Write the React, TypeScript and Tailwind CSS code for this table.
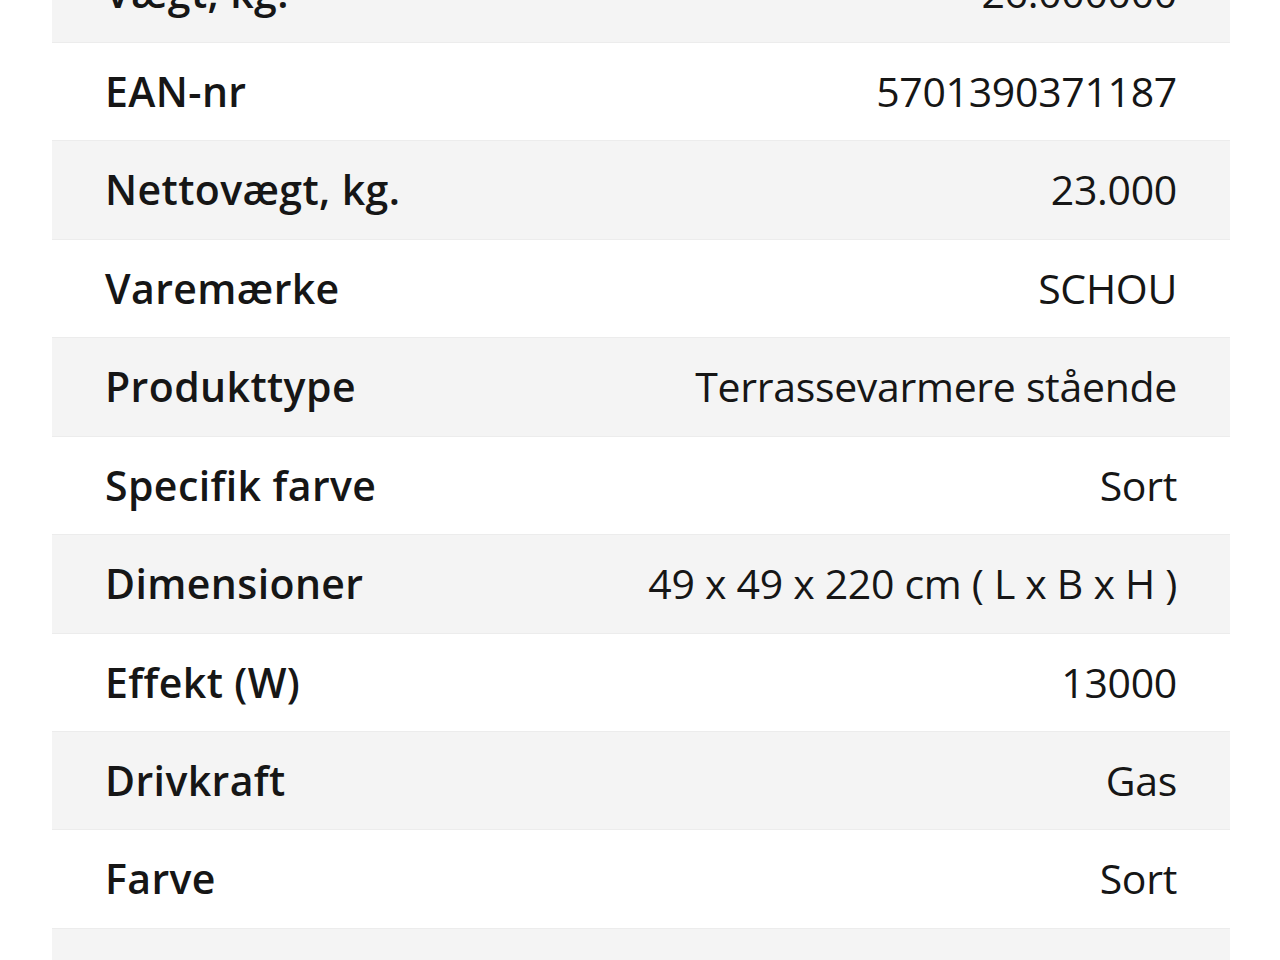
const rows: [string, string][] = [
  ["Vægt, kg.", "26.000000"],
  ["EAN-nr", "5701390371187"],
  ["Nettovægt, kg.", "23.000"],
  ["Varemærke", "SCHOU"],
  ["Produkttype", "Terrassevarmere stående"],
  ["Specifik farve", "Sort"],
  ["Dimensioner", "49 x 49 x 220 cm ( L x B x H )"],
  ["Effekt (W)", "13000"],
  ["Drivkraft", "Gas"],
  ["Farve", "Sort"],
  ["Materiale", "Stål"],
];

export default function App() {
  return (
    <div className="h-[960px] w-[1280px] overflow-hidden bg-white font-['Open_Sans',sans-serif] text-[#161616]">
      <div className="ml-[52px] -mt-[56.5px] flex w-[1178px] flex-col">
        {rows.map(([label, value], i) => (
          <div
            key={label}
            className={`flex h-[98.45px] items-center justify-between border-t border-[#ececec] pl-[53px] pr-[53px] text-[41px] ${
              i % 2 === 0 ? "bg-[#f4f4f4]" : "bg-white"
            }`}
          >
            <span className="font-semibold tracking-[0.4px]">{label}</span>
            <span className="font-normal tracking-[-0.3px]">{value}</span>
          </div>
        ))}
      </div>
    </div>
  );
}
